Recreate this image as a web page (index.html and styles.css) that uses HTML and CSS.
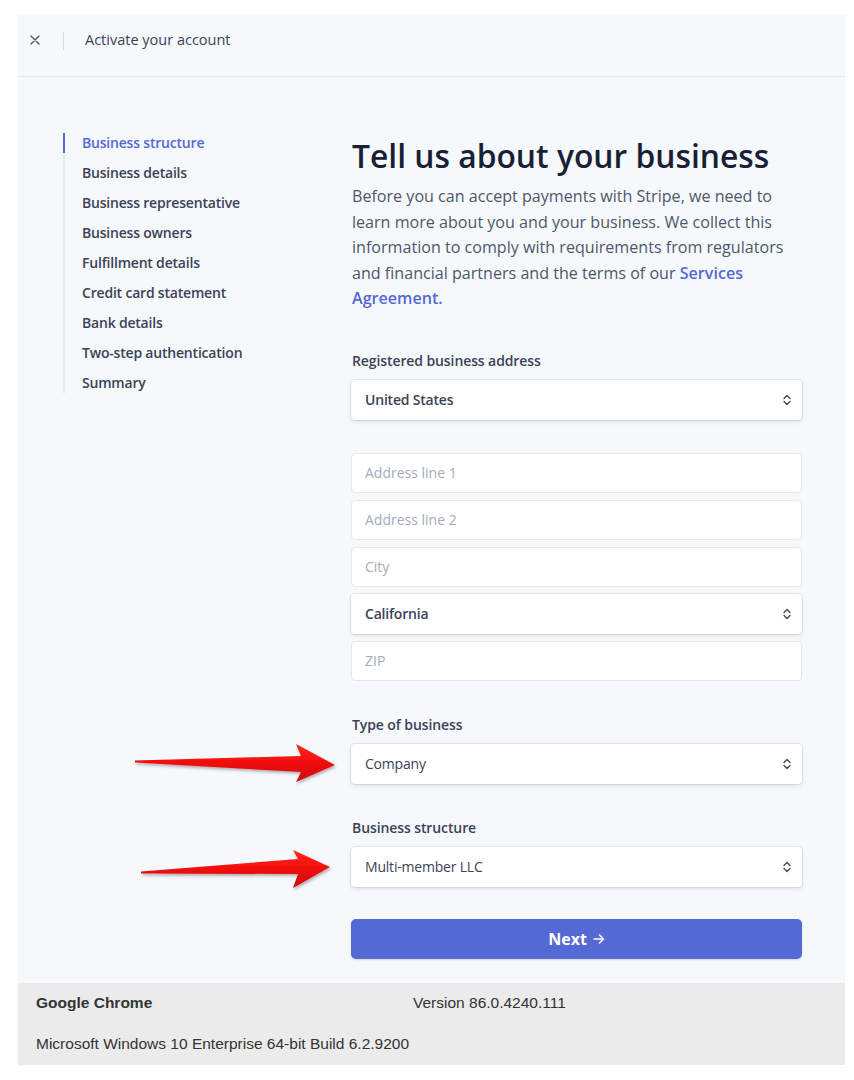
FILE: index.html
```html
<!DOCTYPE html>
<html lang="en">
<head>
<meta charset="utf-8">
<title>Activate your account</title>
<link rel="stylesheet" href="styles.css">
</head>
<body>
<div class="window">
  <div class="app">
    <header class="topbar">
      <svg class="close" viewBox="0 0 10 10" width="10" height="10"><path d="M1 1 L9 9 M9 1 L1 9" fill="none" stroke="#4f566b" stroke-width="1.4" stroke-linecap="round"/></svg>
      <span class="divider"></span>
      <span class="title">Activate your account</span>
    </header>
    <div class="content">
      <nav class="steps">
        <ul>
          <li class="active">Business structure</li>
          <li>Business details</li>
          <li>Business representative</li>
          <li>Business owners</li>
          <li>Fulfillment details</li>
          <li>Credit card statement</li>
          <li>Bank details</li>
          <li>Two-step authentication</li>
          <li>Summary</li>
        </ul>
      </nav>
      <main class="form">
        <h1>Tell us about your business</h1>
        <p class="intro">Before you can accept payments with Stripe, we need to learn more about you and your business. We collect this information to comply with requirements from regulators and financial partners and the terms of our <a href="#">Services Agreement.</a></p>

        <div class="label first">Registered business address</div>
        <div class="select"><span>United States</span><svg class="chev" viewBox="0 0 8 12" width="8" height="12"><path d="M1 4.5 L4 1.5 L7 4.5 M1 7.5 L4 10.5 L7 7.5" fill="none" stroke="#3c4257" stroke-width="1.3" stroke-linecap="round" stroke-linejoin="round"/></svg></div>

        <div class="address">
          <div class="input">Address line 1</div>
          <div class="input">Address line 2</div>
          <div class="input">City</div>
          <div class="select"><span>California</span><svg class="chev" viewBox="0 0 8 12" width="8" height="12"><path d="M1 4.5 L4 1.5 L7 4.5 M1 7.5 L4 10.5 L7 7.5" fill="none" stroke="#3c4257" stroke-width="1.3" stroke-linecap="round" stroke-linejoin="round"/></svg></div>
          <div class="input">ZIP</div>
        </div>

        <div class="label">Type of business</div>
        <div class="select light"><span>Company</span><svg class="chev" viewBox="0 0 8 12" width="8" height="12"><path d="M1 4.5 L4 1.5 L7 4.5 M1 7.5 L4 10.5 L7 7.5" fill="none" stroke="#3c4257" stroke-width="1.3" stroke-linecap="round" stroke-linejoin="round"/></svg></div>

        <div class="label">Business structure</div>
        <div class="select light"><span>Multi-member LLC</span><svg class="chev" viewBox="0 0 8 12" width="8" height="12"><path d="M1 4.5 L4 1.5 L7 4.5 M1 7.5 L4 10.5 L7 7.5" fill="none" stroke="#3c4257" stroke-width="1.3" stroke-linecap="round" stroke-linejoin="round"/></svg></div>

        <button class="next"><span>Next</span><svg viewBox="0 0 12 12" width="12" height="12"><path d="M1 6 H10.5 M6.5 2 L10.5 6 L6.5 10" fill="none" stroke="#ffffff" stroke-width="1.5" stroke-linecap="round" stroke-linejoin="round"/></svg></button>
      </main>
    </div>
  </div>
  <footer class="sysinfo">
    <div class="row"><span class="app-name">Google Chrome</span><span class="version">Version 86.0.4240.111</span></div>
    <div class="row">Microsoft Windows 10 Enterprise 64-bit Build 6.2.9200</div>
  </footer>
</div>

<svg class="annotations" width="854" height="1080" viewBox="0 0 854 1080">
  <defs>
    <linearGradient id="red" x1="0" y1="0" x2="0" y2="1">
      <stop offset="0" stop-color="#ff2a1e"/>
      <stop offset="0.5" stop-color="#f20d0d"/>
      <stop offset="1" stop-color="#c70a0a"/>
    </linearGradient>
    <filter id="shadow" x="-10%" y="-50%" width="130%" height="200%">
      <feDropShadow dx="1" dy="2" stdDeviation="1.5" flood-color="#000" flood-opacity="0.3"/>
    </filter>
  </defs>
  <path d="M135 760.5 L301 756 L296 744 L335 765 L296 782 L301 772 L135 762.5 Z" fill="url(#red)" filter="url(#shadow)"/>
  <path d="M141 871.5 L298 859 L293 850 L330 867 L293 888 L298 874 L141 873.5 Z" fill="url(#red)" filter="url(#shadow)"/>
</svg>
</body>
</html>
```

FILE: styles.css
```css
* { box-sizing: border-box; }

html, body {
  margin: 0;
  padding: 0;
  background: #ffffff;
}

body {
  position: relative;
  width: 854px;
  height: 1080px;
  font-family: "Open Sans", "Noto Sans", sans-serif;
  color: #3c4257;
}

.window {
  margin: 15px 9px 0 18px;
  width: 827px;
}

.app {
  background: #f6f9fc;
  height: 968px;
}

.topbar {
  height: 62px;
  border-bottom: 1px solid #e3e8ee;
  display: flex;
  align-items: flex-start;
  padding-left: 12px;
  padding-top: 15px;
}

.close {
  display: block;
  margin-top: 5px;
}

.divider {
  width: 1px;
  height: 18px;
  margin-top: 2px;
  background: #d5dbe1;
  margin-left: 23px;
  margin-right: 21px;
}

.title {
  font-size: 14.5px;
  line-height: 20px;
  font-weight: 500;
  color: #3c4257;
}

.content {
  display: flex;
  padding-top: 56px;
}

.steps {
  width: 333px;
  padding-left: 45px;
  flex: none;
}

.steps ul {
  list-style: none;
  margin: 0;
  padding: 0;
  border-left: 2px solid #e3e8ee;
  display: flex;
  flex-direction: column;
  gap: 10px;
}

.steps li {
  margin-left: -2px;
  border-left: 2px solid transparent;
  padding-left: 17px;
  height: 20px;
  line-height: 20px;
  font-size: 14px;
  font-weight: 600;
  color: #3c4257;
  letter-spacing: -0.2px;
}

.steps li.active {
  border-left-color: #5469d4;
  color: #5469d4;
}

.form {
  width: 451px;
  padding-top: 3px;
}

h1 {
  margin: 0 0 0 1px;
  font-size: 31.8px;
  line-height: 40px;
  font-weight: 600;
  color: #1a1f36;
}

.intro {
  margin: 8px 0 0 1px;
  font-size: 16.1px;
  line-height: 25.6px;
  color: #4f566b;
}

.intro a {
  color: #5469d4;
  font-weight: 600;
  text-decoration: none;
}

.label {
  margin-top: 34px;
  margin-bottom: 9px;
  margin-left: 1px;
  font-size: 14px;
  line-height: 20px;
  font-weight: 600;
  color: #3c4257;
  letter-spacing: -0.1px;
}

.label.first {
  margin-top: 39px;
}

.select,
.input {
  height: 40px;
  background: #ffffff;
  border-radius: 4px;
  display: flex;
  align-items: center;
  padding: 0 11px 0 14px;
  font-size: 14px;
}

.select {
  justify-content: space-between;
  box-shadow: 0 0 0 1px rgba(60, 66, 87, 0.1), 0 2px 4px rgba(60, 66, 87, 0.12);
  font-weight: 600;
  color: #3c4257;
  letter-spacing: -0.2px;
}

.select.light {
  font-weight: 500;
}

.input {
  border: 1px solid #e3e8ee;
  padding-left: 13px;
  color: #a3acb9;
}

.address {
  margin-top: 33px;
  display: flex;
  flex-direction: column;
  gap: 7px;
}

.chev {
  display: block;
}

.next {
  margin-top: 32px;
  width: 100%;
  height: 40px;
  border: 0;
  border-radius: 5px;
  background: #5469d4;
  color: #ffffff;
  font-family: "Open Sans", "Noto Sans", sans-serif;
  font-size: 16px;
  font-weight: 700;
  display: flex;
  align-items: center;
  justify-content: center;
  gap: 6px;
  padding: 0;
  box-shadow: 0 1px 2px rgba(60, 66, 87, 0.2);
}

.next svg {
  display: block;
  margin-top: 1px;
}

.sysinfo {
  background: #ebebeb;
  height: 82px;
  padding: 10px 18px 0;
  font-family: "Liberation Sans", Arial, sans-serif;
  font-size: 15.5px;
  color: #333333;
}

.sysinfo .row {
  height: 41px;
  line-height: 20px;
  display: flex;
}

.app-name {
  font-weight: 700;
  width: 377px;
}

.annotations {
  position: absolute;
  left: 0;
  top: 0;
  pointer-events: none;
}
```
